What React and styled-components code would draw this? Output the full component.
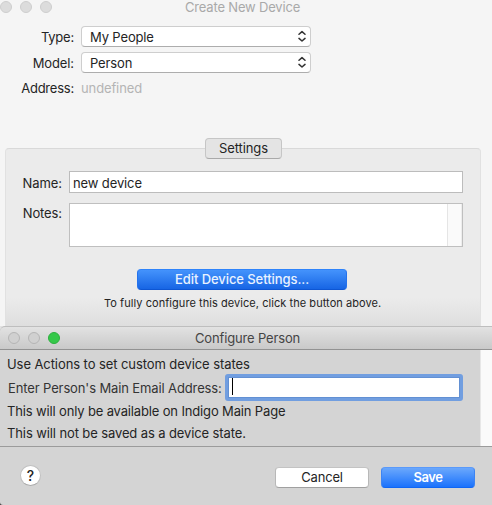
import React from 'react';
import styled, { createGlobalStyle } from 'styled-components';

const GlobalStyle = createGlobalStyle`
  * { box-sizing: border-box; }
  body { margin: 0; background: #f5f5f5; }
`;

const Screen = styled.div`
  width: 492px;
  height: 505px;
  overflow: hidden;
  background: linear-gradient(#e2e2e2 0 400px, #444 400px);
  font-family: Inter, 'Liberation Sans', sans-serif;
  font-size: 13px;
  line-height: 20px;
  color: #242424;
`;

const Text = styled.span`
  display: block;
  white-space: nowrap;
  letter-spacing: ${(p) => p.$spacing || 0}px;
  color: ${(p) => p.$color || 'inherit'};
`;

const MainWindow = styled.main`
  height: 326px;
  display: flex;
  flex-direction: column;
  background: #f5f5f5;
`;

const MainTitleBar = styled.header`
  height: 26px;
  display: grid;
  grid-template-columns: 185px 1fr;
  align-items: start;
  line-height: 15px;
`;

const Lights = styled.div`
  display: flex;
  gap: 8px;
  padding: ${(p) => p.$inset};
`;

const Light = styled.i`
  width: 12px;
  height: 12px;
  border-radius: 50%;
  background: ${(p) => p.$fill};
  border: 1px solid ${(p) => p.$edge};
`;

const DeviceForm = styled.div`
  height: 122px;
  display: grid;
  grid-template-columns: 74px 230px;
  grid-template-rows: 21px 21px 20px;
  column-gap: 7px;
  row-gap: 5px;
`;

const FieldLabel = styled(Text)`
  justify-self: end;
  padding-top: ${(p) => p.$drop || 0}px;
`;

const Popup = styled.div`
  height: 21px;
  display: flex;
  justify-content: space-between;
  align-items: flex-start;
  padding: 0 4px 0 8px;
  background: #fff;
  border: 1px solid #cecece;
  border-bottom-color: #adadad;
  border-radius: 4px;
  svg { margin-top: 3px; }
`;

const Panel = styled.section`
  flex: 1;
  width: 476px;
  margin-left: 5px;
  padding: 0 17px;
  background: #ebebeb;
  border: 1px solid #e1e1e1;
  border-top-color: #d9d9d9;
  border-bottom: 0;
  border-radius: 4px 4px 0 0;
`;

const Tab = styled.div`
  width: 77px;
  height: 21px;
  margin: -11px 0 12px 182px;
  display: flex;
  justify-content: center;
  line-height: 19px;
  background: #e4e4e4;
  border: 1px solid #c6c6c6;
  border-bottom-color: #a9a9a9;
  border-radius: 4px;
`;

const PanelField = styled.div`
  display: grid;
  grid-template-columns: 39px 394px;
  column-gap: 7px;
  align-items: start;
  margin-bottom: ${(p) => p.$after}px;
`;

const TextField = styled.div`
  height: 22px;
  padding: 1px 3px;
  background: #fff;
  border: 1px solid #bcbcbc;
`;

const NotesArea = styled.div`
  height: 44px;
  display: flex;
  justify-content: flex-end;
  background: #fff;
  border: 1px solid #bfbfbf;
`;

const ScrollTrack = styled.div`
  width: 15px;
  background: #fafafa;
  border-left: 1px solid #e5e5e5;
  border-right: 1px solid #ededed;
`;

const Button = styled.button`
  width: ${(p) => p.$width}px;
  height: 21px;
  padding: 0;
  display: flex;
  justify-content: center;
  font: inherit;
  line-height: 19px;
  border: 1px solid;
  border-radius: 4px;
  color: #242424;
  background: #fff;
  border-color: #c3c3c3 #b8b8b8 #a0a0a0;
`;

const EditButton = styled(Button)`
  margin-left: 114px;
  color: #e9f2ff;
  font-weight: 500;
  background: linear-gradient(#4493fc, #1765e4);
  border-color: #2e83fa #2472ed #0e56d3;
`;

const SaveButton = styled(Button)`
  color: #fff;
  font-weight: 600;
  background: linear-gradient(#6ba8fc, #1b72fc);
  border-color: #5b9afa #3d84f3 #0f66f4;
`;

const Hint = styled.div`
  height: 36px;
  margin: 0 -17px;
  padding: 3px 0 0 98px;
  font-size: 11px;
  background: linear-gradient(#ebebeb 8px, #dedede);
`;

const Dialog = styled.section`
  height: 179px;
  background: #d4d4d4;
  border-radius: 5px 0 0 3px;
  overflow: hidden;
`;

const DialogTitleBar = styled.header`
  height: 24px;
  display: grid;
  grid-template-columns: 195px 1fr;
  background: linear-gradient(#e2e2e2, #c9c9c9);
  border-top: 1px solid #bebebe;
  border-bottom: 1px solid #929292;
  border-radius: 5px 0 0 0;
  line-height: 23px;
`;

const DialogContent = styled.div`
  height: 96px;
  display: flex;
`;

const Fields = styled.div`
  width: 480px;
  padding: 4px 0 0 7px;
`;

const EmptyTrack = styled.div`
  flex: 1;
  background: #fafafa;
  border-left: 1px solid #e7e7e7;
`;

const EmailRow = styled.div`
  height: 26px;
  display: grid;
  grid-template-columns: 217px 238px;
  align-items: start;
  padding-left: 1px;
  margin-bottom: 1px;
  line-height: 28px;
  color: #343434;
`;

const EmailInput = styled.div`
  height: 27px;
  padding: 1px 4px;
  background: #fff;
  border: 3px solid #719ee0;
  border-radius: 3px;
  box-shadow: inset 0 0 0 1px #6290d3;
`;

const Caret = styled.div`
  width: 1px;
  height: 17px;
  background: #000;
`;

const StateNote = styled(Text)`
  height: 22px;
`;

const Footer = styled.footer`
  height: 59px;
  display: flex;
  align-items: flex-start;
  padding: 20px 17px 0 20px;
  border-top: 1px solid #9b9b9b;
`;

const HelpButton = styled.button`
  width: 21px;
  height: 21px;
  margin: -2px auto 0 0;
  padding: 0;
  border: 1px solid #c0c0c0;
  border-bottom-color: #aaa;
  border-radius: 50%;
  background: #fff;
  font: 500 14px/19px Inter, sans-serif;
  color: #242424;
`;

const Actions = styled.div`
  display: flex;
  gap: 12px;
`;

function WindowLights({ inset, fills, edges }) {
  return (
    <Lights $inset={inset}>
      {fills.map((fill, i) => <Light key={i} $fill={fill} $edge={edges[i]} />)}
    </Lights>
  );
}

function Select({ value, spacing }) {
  return (
    <Popup>
      <Text $spacing={spacing}>{value}</Text>
      <svg width="8" height="13" viewBox="0 0 8 13" fill="none" stroke="#333" strokeWidth="1.5" strokeLinecap="round" strokeLinejoin="round">
        <path d="M1 4.2 4 1.6 7 4.2M1 8.4l3 2.6 3-2.6" />
      </svg>
    </Popup>
  );
}

export default function App() {
  return (
    <Screen>
      <GlobalStyle />
      <MainWindow>
        <MainTitleBar>
          <WindowLights inset="1px 0 0" fills={['#dcdcdc', '#dcdcdc', '#dcdcdc']} edges={['#cecece', '#cecece', '#cecece']} />
          <Text $spacing={-0.18} $color="#a9a9a9">Create New Device</Text>
        </MainTitleBar>
        <DeviceForm>
          <FieldLabel $spacing={-0.22} $drop={1}>Type:</FieldLabel>
          <Select value="My People" spacing={-0.14} />
          <FieldLabel $spacing={-0.12} $drop={1}>Model:</FieldLabel>
          <Select value="Person" spacing={-0.14} />
          <FieldLabel $spacing={-0.22}>Address:</FieldLabel>
          <Text $spacing={-0.12} $color="#b4b4b4">undefined</Text>
        </DeviceForm>
        <Panel>
          <Tab><Text $spacing={-0.12}>Settings</Text></Tab>
          <PanelField $after={10}>
            <FieldLabel $spacing={-0.05} $drop={2}>Name:</FieldLabel>
            <TextField><Text $spacing={-0.12}>new device</Text></TextField>
          </PanelField>
          <PanelField $after={22}>
            <FieldLabel $spacing={-0.1}>Notes:</FieldLabel>
            <NotesArea><ScrollTrack /></NotesArea>
          </PanelField>
          <EditButton $width={210}><Text $spacing={-0.07}>Edit Device Settings...</Text></EditButton>
          <Hint><Text $spacing={0.055}>To fully configure this device, click the button above.</Text></Hint>
        </Panel>
      </MainWindow>
      <Dialog>
        <DialogTitleBar>
          <WindowLights inset="5px 0 0 8px" fills={['#d0d0d0', '#d0d0d0', '#35c84a']} edges={['#b5b5b5', '#b5b5b5', '#2cb03e']} />
          <Text $spacing={-0.15} $color="#454545">Configure Person</Text>
        </DialogTitleBar>
        <DialogContent>
          <Fields>
            <Text $spacing={-0.08}>Use Actions to set custom device states</Text>
            <EmailRow>
              <Text $spacing={-0.12}>Enter Person's Main Email Address:</Text>
              <EmailInput><Caret /></EmailInput>
            </EmailRow>
            <StateNote $spacing={-0.15}>This will only be available on Indigo Main Page</StateNote>
            <StateNote $spacing={-0.11}>This will not be saved as a device state.</StateNote>
          </Fields>
          <EmptyTrack />
        </DialogContent>
        <Footer>
          <HelpButton>?</HelpButton>
          <Actions>
            <Button $width={94}><Text $spacing={-0.2}>Cancel</Text></Button>
            <SaveButton $width={94}><Text $spacing={-0.4}>Save</Text></SaveButton>
          </Actions>
        </Footer>
      </Dialog>
    </Screen>
  );
}
